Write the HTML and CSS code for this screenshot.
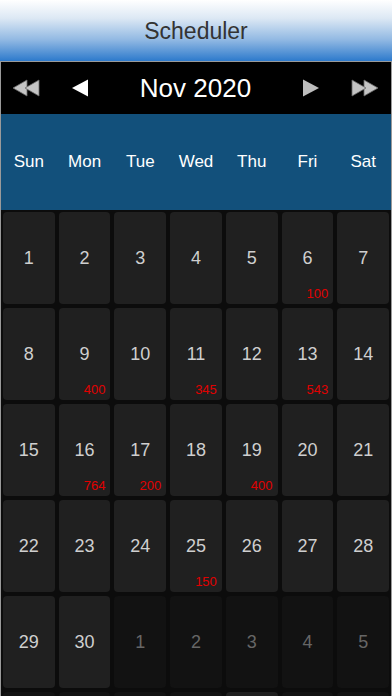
FILE: index.html
```html
<!DOCTYPE html>
<html lang="en">
<head>
    <meta charset="UTF-8">
    <meta name="viewport" content="width=device-width, initial-scale=1.0">
    <title>Scheduler</title>
    <link rel="stylesheet" href="styles.css">
</head>
<body>

<div class="header">Scheduler</div>

<div class="calendar">
    <!-- Month navigation -->
    <div class="nav">
        <div class="nav-group left">
            <svg class="dbl" width="30" height="18" viewBox="0 0 30 18">
                <polygon points="1,9 15,1 15,17" fill="#c4c4c4" stroke="#6a6a6a" stroke-width="0.8"/>
                <polygon points="13,9 27,1 27,17" fill="#c4c4c4" stroke="#6a6a6a" stroke-width="0.8"/>
            </svg>
            <svg class="sgl" width="17" height="18" viewBox="0 0 17 18">
                <polygon points="0,9 16,0.5 16,17.5" fill="#ffffff"/>
            </svg>
        </div>
        <div class="month">Nov 2020</div>
        <div class="nav-group right">
            <svg class="sgl" width="17" height="18" viewBox="0 0 17 18">
                <polygon points="17,9 1,0.5 1,17.5" fill="#bdbdbd"/>
            </svg>
            <svg class="dbl" width="30" height="18" viewBox="0 0 30 18">
                <polygon points="29,9 15,1 15,17" fill="#c4c4c4" stroke="#6a6a6a" stroke-width="0.8"/>
                <polygon points="17,9 3,1 3,17" fill="#c4c4c4" stroke="#6a6a6a" stroke-width="0.8"/>
            </svg>
        </div>
    </div>

    <!-- Week days -->
    <div class="weekdays">
        <div>Sun</div><div>Mon</div><div>Tue</div><div>Wed</div><div>Thu</div><div>Fri</div><div>Sat</div>
    </div>

    <!-- Days -->
    <div class="days">
        <div class="day">1</div>
        <div class="day">2</div>
        <div class="day">3</div>
        <div class="day">4</div>
        <div class="day">5</div>
        <div class="day">6<span class="count">100</span></div>
        <div class="day">7</div>

        <div class="day">8</div>
        <div class="day">9<span class="count">400</span></div>
        <div class="day">10</div>
        <div class="day">11<span class="count">345</span></div>
        <div class="day">12</div>
        <div class="day">13<span class="count">543</span></div>
        <div class="day">14</div>

        <div class="day">15</div>
        <div class="day">16<span class="count">764</span></div>
        <div class="day">17<span class="count">200</span></div>
        <div class="day">18</div>
        <div class="day">19<span class="count">400</span></div>
        <div class="day">20</div>
        <div class="day">21</div>

        <div class="day">22</div>
        <div class="day">23</div>
        <div class="day">24</div>
        <div class="day">25<span class="count">150</span></div>
        <div class="day">26</div>
        <div class="day">27</div>
        <div class="day">28</div>

        <div class="day">29</div>
        <div class="day">30</div>
        <div class="day other">1</div>
        <div class="day other">2</div>
        <div class="day other">3</div>
        <div class="day other">4</div>
        <div class="day other">5</div>

        <!-- next row only peeks in at the bottom edge -->
        <div class="day other"></div>
        <div class="day other"></div>
        <div class="day other"></div>
        <div class="day other"></div>
        <div class="day other today"></div>
        <div class="day other"></div>
        <div class="day other"></div>
    </div>
</div>

</body>
</html>
```

FILE: styles.css
```css
body {
    margin: 0;
    padding: 0;
    font-family: "Liberation Sans", Arial, sans-serif;
    background-color: #0c0c0c;
    height: 696px;
    overflow: hidden;
}

.header {
    height: 61px;
    line-height: 62px;
    text-align: center;
    font-size: 23px;
    color: #333333;
    background: linear-gradient(to bottom, #ffffff 0%, #dce8f4 30%, #92b9e3 65%, #2d7acc 100%);
}

.calendar {
    border: 1px solid #9a9a9a;
    border-bottom: none;
    background-color: #0c0c0c;
}

.nav {
    height: 52px;
    background-color: #000000;
    display: flex;
    align-items: center;
    color: white;
}

.nav-group {
    display: flex;
    align-items: center;
    gap: 30px;
}

.nav-group.left {
    padding-left: 11px;
}

.nav-group.right {
    padding-right: 12px;
}

.month {
    flex: 1;
    text-align: center;
    font-size: 26px;
    padding-top: 1px;
}

.weekdays {
    height: 96px;
    background-color: #12507b;
    display: grid;
    grid-template-columns: repeat(7, 1fr);
    gap: 4px;
    padding: 0 2px;
    align-items: center;
    text-align: center;
    color: white;
    font-size: 17px;
}

.days {
    display: grid;
    grid-template-columns: repeat(7, 1fr);
    grid-auto-rows: 92px;
    gap: 4px;
    padding: 2px;
}

.day {
    position: relative;
    background-color: #202020;
    border-radius: 4px;
    display: flex;
    justify-content: center;
    align-items: center;
    color: #cfcfcf;
    font-size: 18px;
}

.day.other {
    background-color: #121212;
    color: #666666;
}

.day.other.today {
    background-color: #1f1f1f;
}

.count {
    position: absolute;
    right: 5px;
    bottom: 3px;
    font-size: 13px;
    color: #e00000;
}
```
